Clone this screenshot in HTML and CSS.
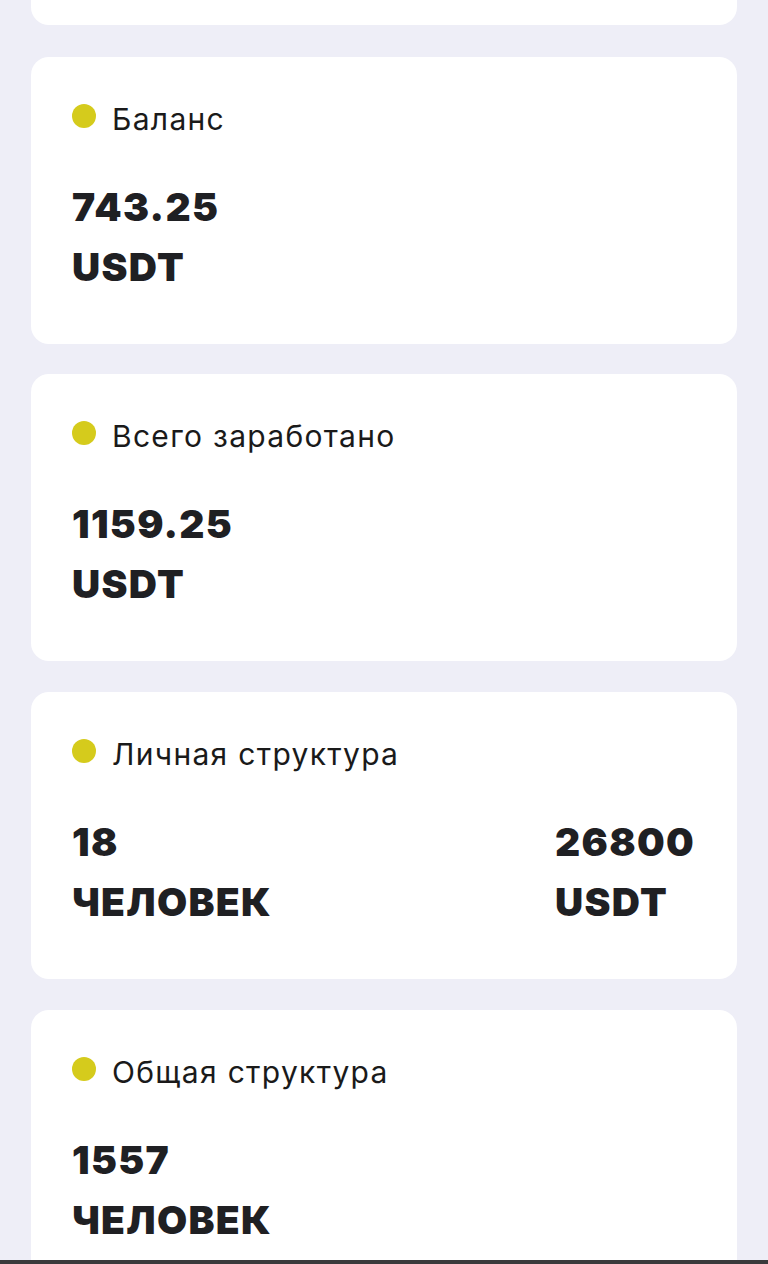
FILE: index.html
```html
<!DOCTYPE html>
<html lang="ru">
<head>
<meta charset="utf-8">
<link rel="stylesheet" href="styles.css">
</head>
<body>
<div class="list">
  <div class="card card-cut"></div>

  <div class="card">
    <div class="head"><span class="dot"></span><span class="label">Баланс</span></div>
    <div class="values">
      <div class="val"><div>743.25</div><div>USDT</div></div>
    </div>
  </div>

  <div class="card">
    <div class="head"><span class="dot"></span><span class="label">Всего заработано</span></div>
    <div class="values">
      <div class="val"><div>1159.25</div><div>USDT</div></div>
    </div>
  </div>

  <div class="card">
    <div class="head"><span class="dot"></span><span class="label">Личная структура</span></div>
    <div class="values">
      <div class="val"><div>18</div><div>ЧЕЛОВЕК</div></div>
      <div class="val"><div>26800</div><div>USDT</div></div>
    </div>
  </div>

  <div class="card">
    <div class="head"><span class="dot"></span><span class="label">Общая структура</span></div>
    <div class="values">
      <div class="val"><div>1557</div><div>ЧЕЛОВЕК</div></div>
    </div>
  </div>
</div>
<div class="bottom-bar"></div>
</body>
</html>
```

FILE: styles.css
```css
html, body {
  margin: 0;
  padding: 0;
  height: 1264px;
  overflow: hidden;
  background: #eeeef7;
}
body {
  position: relative;
  font-family: "Inter", "Noto Sans", sans-serif;
  color: #1f2023;
}
.list {
  display: flex;
  flex-direction: column;
  gap: 30.7px;
  padding: 0 31px;
}
.card {
  background: #ffffff;
  border-radius: 18px;
  height: 287px;
  box-sizing: border-box;
  padding: 44px 42px 0 41px;
  flex-shrink: 0;
}
.card-cut {
  margin-top: -262px;
  margin-bottom: 1px;
}
.head {
  display: flex;
  align-items: center;
  height: 30px;
  gap: 16px;
}
.dot {
  width: 24px;
  height: 24px;
  border-radius: 50%;
  background: #d5cb1c;
  flex-shrink: 0;
}
.label {
  font-size: 30px;
  font-weight: 400;
  line-height: 30px;
  letter-spacing: 1.3px;
  color: #1a1a1a;
  position: relative;
  top: 3px;
}
.values {
  display: flex;
  justify-content: space-between;
  margin-top: 46px;
}
.val {
  font-size: 39px;
  font-weight: 900;
  line-height: 60px;
  letter-spacing: 1.3px;
}
.bottom-bar {
  position: absolute;
  left: 0;
  right: 0;
  bottom: 0;
  height: 4px;
  background: #3a3a3c;
}
```
